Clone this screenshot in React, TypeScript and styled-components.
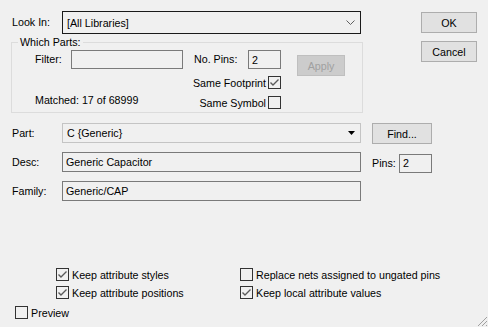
import React from "react";
import styled, { createGlobalStyle } from "styled-components";

const GlobalStyle = createGlobalStyle`
  html, body {
    margin: 0;
    padding: 0;
    background: #f0f0f0;
  }
  body {
    font-family: "Liberation Sans", Arial, sans-serif;
    font-size: 10.7px;
    font-weight: normal;
    color: #000;
  }
`;

const Dialog = styled.div`
  position: relative;
  width: 488px;
  height: 327px;
  box-sizing: border-box;
  padding-top: 11px;
  background: #f0f0f0;
  overflow: hidden;
`;

const TopRow = styled.div`
  display: flex;
  padding-left: 11px;
`;

const LeftCol = styled.div`
  width: 352px;
`;

const ButtonCol = styled.div`
  display: flex;
  flex-direction: column;
  gap: 8px;
  margin-left: 58px;
  margin-top: 1px;
`;

const LookRow = styled.div`
  display: flex;
  align-items: center;
  height: 23px;
`;

const Label = styled.span<{ $w?: number }>`
  display: inline-block;
  width: ${(p) => (p.$w ? `${p.$w}px` : "auto")};
  white-space: nowrap;
  line-height: 13px;
  font-weight: normal;
`;

const Combo = styled.div<{ $dark?: boolean }>`
  box-sizing: border-box;
  display: flex;
  align-items: center;
  justify-content: space-between;
  width: 299px;
  height: ${(p) => (p.$dark ? 23 : 20)}px;
  padding: 0 5px 0 4px;
  border: 1px solid ${(p) => (p.$dark ? "#1a1a1a" : "#c4c4c4")};
  background: #f0f0f0;
`;

const Field = styled.div<{ $w: number; $h?: number }>`
  box-sizing: border-box;
  display: flex;
  align-items: center;
  width: ${(p) => p.$w}px;
  height: ${(p) => p.$h ?? 20}px;
  padding: 0 3px;
  border: 1px solid #7a7a7a;
  background: #f0f0f0;
  white-space: nowrap;
`;

const Button = styled.div<{ $w: number; $disabled?: boolean }>`
  box-sizing: border-box;
  display: flex;
  align-items: center;
  justify-content: center;
  width: ${(p) => p.$w}px;
  height: 21px;
  border: 1px solid ${(p) => (p.$disabled ? "#bfbfbf" : "#adadad")};
  background: ${(p) => (p.$disabled ? "#cccccc" : "#e1e1e1")};
  color: ${(p) => (p.$disabled ? "#a0a0a0" : "#000")};
`;

const Group = styled.fieldset`
  box-sizing: border-box;
  width: 352px;
  height: 77px;
  margin: 2px 0 0;
  padding: 2px 0 0 0;
  border: 1px solid #dcdcdc;
`;

const Legend = styled.legend`
  margin-left: 6px;
  padding: 0 2px;
  line-height: 12px;
`;

const GroupBody = styled.div`
  display: flex;
  height: 58px;
  padding-left: 23px;
`;

const FilterCol = styled.div`
  display: flex;
  flex-direction: column;
  width: 148px;
  margin-right: 11px;
`;

const InlineRow = styled.div`
  display: flex;
  align-items: center;
`;

const Matched = styled.div`
  margin-top: auto;
  line-height: 13px;
  padding-bottom: 1px;
`;

const PinsCol = styled.div`
  display: flex;
  flex-direction: column;
  gap: 7px;
`;

const PinsTop = styled.div`
  display: flex;
  align-items: flex-start;
  height: 19px;
`;

const ApplySlot = styled.div`
  margin: 5px 0 0 16px;
`;

const CheckRight = styled.label`
  display: flex;
  align-items: center;
  justify-content: flex-end;
  gap: 2px;
  width: 87px;
  height: 13px;
  white-space: nowrap;
  font-weight: normal;
`;

const PartGrid = styled.div`
  display: grid;
  grid-template-columns: 39px 299px auto;
  grid-auto-rows: 20px;
  column-gap: 11px;
  row-gap: 9px;
  margin-top: 10px;
  padding-left: 12px;
  align-items: center;
`;

const Extra = styled.div<{ $offset?: number }>`
  display: flex;
  align-items: center;
  margin-top: ${(p) => p.$offset ?? 0}px;
`;

const Options = styled.div`
  display: grid;
  grid-template-columns: 184px auto;
  grid-auto-rows: 13px;
  row-gap: 5px;
  margin-top: 67px;
  padding-left: 56px;
`;

const CheckItem = styled.label`
  display: flex;
  align-items: center;
  gap: 3px;
  height: 13px;
  white-space: nowrap;
  font-weight: normal;
`;

const Preview = styled(CheckItem)`
  margin-top: 7px;
  padding-left: 15px;
`;

const BoxWrap = styled.span`
  display: inline-flex;
  width: 13px;
  height: 13px;
  flex: none;
`;

const Grip = styled.svg`
  position: absolute;
  right: 0;
  bottom: 0;
`;

function CheckBox({ checked }: { checked?: boolean }) {
  return (
    <BoxWrap>
      <svg width="13" height="13" viewBox="0 0 13 13">
        <rect x="0.5" y="0.5" width="12" height="12" fill="#f0f0f0" stroke="#333333" />
        {checked && (
          <polyline
            points="2.5,6.5 5,9 10.5,3.5"
            fill="none"
            stroke="#5a5a5a"
            strokeWidth="1.4"
          />
        )}
      </svg>
    </BoxWrap>
  );
}

export default function App() {
  return (
    <Dialog>
      <GlobalStyle />
      <TopRow>
        <LeftCol>
          <LookRow>
            <Label $w={50} style={{ paddingLeft: 1 }}>Look In:</Label>
            <Combo $dark>
              <span>[All Libraries]</span>
              <svg width="9" height="5" viewBox="0 0 9 5">
                <polyline points="0.5,0.5 4.5,4.5 8.5,0.5" fill="none" stroke="#606060" />
              </svg>
            </Combo>
          </LookRow>
          <Group>
            <Legend>Which Parts:</Legend>
            <GroupBody>
              <FilterCol>
                <InlineRow>
                  <Label $w={36}>Filter:</Label>
                  <Field $w={112} $h={19} />
                </InlineRow>
                <Matched>Matched: 17 of 68999</Matched>
              </FilterCol>
              <PinsCol>
                <PinsTop>
                  <InlineRow>
                    <Label $w={54}>No. Pins:</Label>
                    <Field $w={33} $h={19}>2</Field>
                  </InlineRow>
                  <ApplySlot>
                    <Button $w={48} $disabled>Apply</Button>
                  </ApplySlot>
                </PinsTop>
                <CheckRight>
                  Same Footprint
                  <CheckBox checked />
                </CheckRight>
                <CheckRight>
                  Same Symbol
                  <CheckBox />
                </CheckRight>
              </PinsCol>
            </GroupBody>
          </Group>
        </LeftCol>
        <ButtonCol>
          <Button $w={56}>OK</Button>
          <Button $w={56}>Cancel</Button>
        </ButtonCol>
      </TopRow>

      <PartGrid>
        <Label>Part:</Label>
        <Combo>
          <span>C {"{Generic}"}</span>
          <svg width="7" height="4" viewBox="0 0 7 4">
            <polygon points="0,0 7,0 3.5,4" fill="#000" />
          </svg>
        </Combo>
        <Extra $offset={1}>
          <Button $w={60}>Find...</Button>
        </Extra>

        <Label>Desc:</Label>
        <Field $w={299}>Generic Capacitor</Field>
        <Extra $offset={2}>
          <Label $w={27}>Pins:</Label>
          <Field $w={33} $h={19}>2</Field>
        </Extra>

        <Label>Family:</Label>
        <Field $w={299}>Generic/CAP</Field>
        <span />
      </PartGrid>

      <Options>
        <CheckItem>
          <CheckBox checked />
          Keep attribute styles
        </CheckItem>
        <CheckItem>
          <CheckBox />
          Replace nets assigned to ungated pins
        </CheckItem>
        <CheckItem>
          <CheckBox checked />
          Keep attribute positions
        </CheckItem>
        <CheckItem>
          <CheckBox checked />
          Keep local attribute values
        </CheckItem>
      </Options>
      <Preview>
        <CheckBox />
        Preview
      </Preview>

      <Grip width="12" height="12" viewBox="0 0 12 12">
        <g fill="#a0a0a0">
          <rect x="10" y="2" width="1" height="1" />
          <rect x="9" y="3" width="1" height="1" />
          <rect x="8" y="4" width="1" height="1" />
          <rect x="7" y="5" width="1" height="1" />
          <rect x="6" y="6" width="1" height="1" />
          <rect x="5" y="7" width="1" height="1" />
          <rect x="4" y="8" width="1" height="1" />
          <rect x="3" y="9" width="1" height="1" />
          <rect x="2" y="10" width="1" height="1" />
          <rect x="10" y="6" width="1" height="1" />
          <rect x="9" y="7" width="1" height="1" />
          <rect x="8" y="8" width="1" height="1" />
          <rect x="7" y="9" width="1" height="1" />
          <rect x="6" y="10" width="1" height="1" />
          <rect x="10" y="10" width="1" height="1" />
        </g>
      </Grip>
    </Dialog>
  );
}
